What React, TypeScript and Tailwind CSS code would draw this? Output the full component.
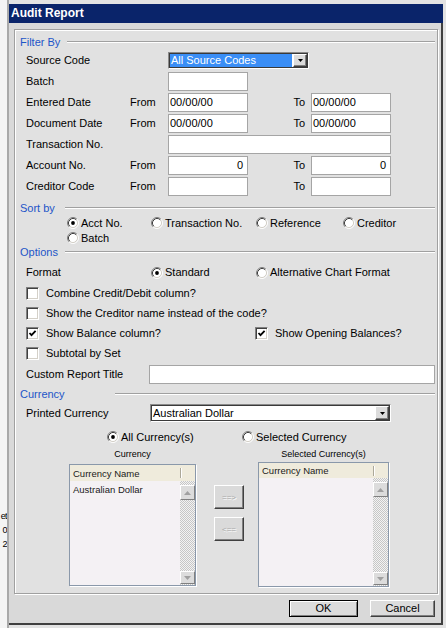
import React from "react";

function Radio({ checked = false }: { checked?: boolean }) {
  return (
    <svg width="12" height="12" viewBox="0 0 12 12" className="shrink-0">
      <circle cx="6" cy="6" r="4.5" fill="#ffffff" />
      <path d="M2.11 9.89 A5.5 5.5 0 0 1 9.89 2.11" stroke="#808080" strokeWidth="1" fill="none" />
      <path d="M9.89 2.11 A5.5 5.5 0 0 1 2.11 9.89" stroke="#ffffff" strokeWidth="1" fill="none" />
      <path d="M2.82 9.18 A4.5 4.5 0 0 1 9.18 2.82" stroke="#404040" strokeWidth="1" fill="none" />
      <path d="M9.18 2.82 A4.5 4.5 0 0 1 2.82 9.18" stroke="#d4d0c8" strokeWidth="1" fill="none" />
      {checked && <circle cx="6" cy="6" r="1.9" fill="#000000" />}
    </svg>
  );
}

function RadioItem({ label, checked = false, w = "" }: { label: string; checked?: boolean; w?: string }) {
  return (
    <div className={"flex items-center gap-[2px] shrink-0 " + w}>
      <Radio checked={checked} />
      <span className="whitespace-nowrap">{label}</span>
    </div>
  );
}

function Check({ checked = false }: { checked?: boolean }) {
  return (
    <div className="w-[13px] h-[13px] shrink-0 bg-white border border-t-[#808080] border-l-[#808080] border-b-white border-r-white shadow-[inset_1px_1px_0_#404040,inset_-1px_-1px_0_#d4d0c8] flex items-center justify-center">
      {checked && (
        <svg width="9" height="9" viewBox="0 0 9 9">
          <path d="M1.5 4 L3.5 6.2 L7.6 1.8" stroke="#000" strokeWidth="1.8" fill="none" />
        </svg>
      )}
    </div>
  );
}

function CheckItem({ label, checked = false, w = "" }: { label: string; checked?: boolean; w?: string }) {
  return (
    <div className={"flex items-center gap-[7px] shrink-0 " + w}>
      <Check checked={checked} />
      <span className="whitespace-nowrap">{label}</span>
    </div>
  );
}

function SectionHeader({ label, labelW }: { label: string; labelW: string }) {
  return (
    <div className="flex h-[14px] items-center pl-[5px] shrink-0">
      <span className={"text-[#1d55c8] whitespace-nowrap shrink-0 " + labelW}>{label}</span>
      <div className="flex-1 h-[2px] border-t border-t-[#a0a0a0] border-b border-b-white mr-[2px]" />
    </div>
  );
}

function Box({ w, children, right = false }: { w: string; children?: React.ReactNode; right?: boolean }) {
  return (
    <div
      className={
        "h-[19px] shrink-0 bg-white border border-[#a5a5a5] flex items-center " +
        (right ? "justify-end pr-[4px] " : "pl-[1px] ") +
        w
      }
    >
      {children}
    </div>
  );
}

function DropBtn() {
  return (
    <div className="w-[14px] h-full shrink-0 bg-[#dcdcdc] border border-t-white border-l-white border-b-[#404040] border-r-[#404040] shadow-[inset_-1px_-1px_0_#808080] flex items-center justify-center">
      <svg width="5" height="3" viewBox="0 0 5 3">
        <path d="M0 0 H5 L2.5 3 Z" fill="#000" />
      </svg>
    </div>
  );
}

function ScrollBtn({ up = false, h }: { up?: boolean; h: string }) {
  return (
    <div className={"w-full bg-[#dcdcdc] border border-t-white border-l-white border-b-[#808080] border-r-[#808080] flex items-center justify-center " + h}>
      <svg width="7" height="4" viewBox="0 0 7 4">
        {up ? <path d="M3.5 0 L7 4 H0 Z" fill="#a0a0a0" /> : <path d="M0 0 H7 L3.5 4 Z" fill="#a0a0a0" />}
      </svg>
    </div>
  );
}

function List({ size, headH, rows }: { size: string; headH: string; rows: string[] }) {
  return (
    <div className={"flex flex-col shrink-0 border border-[#8a98aa] shadow-[1px_1px_0_#fff] bg-[#f4f1f4] " + size}>
      <div className={"flex shrink-0 bg-[#efebdc] " + headH}>
        <div className="flex-1 flex items-center pl-[3px] text-[9.5px] text-[#1a1a1a]">Currency Name</div>
        <div className="w-[15px] flex items-center">
          <div className="w-[1px] h-[10px] bg-[#aca899] shadow-[1px_0_0_#fff]" />
        </div>
      </div>
      <div className="flex flex-1 min-h-0">
        <div className="flex-1 pl-[3px]">
          {rows.map((r) => (
            <div key={r} className="h-[16px] flex items-center text-[9.5px] text-[#1a1a1a]">
              {r}
            </div>
          ))}
        </div>
        <div className="w-[15px] flex flex-col justify-between pt-[4px] pb-[1px] bg-[image:conic-gradient(#c6c6c6_25%,#f3f3f3_0_50%,#c6c6c6_0_75%,#f3f3f3_0)] bg-[length:2px_2px]">
          <ScrollBtn up h="h-[15px]" />
          <ScrollBtn h="h-[13px]" />
        </div>
      </div>
    </div>
  );
}

function MoveBtn({ label }: { label: string }) {
  return (
    <div className="w-[30px] h-[24px] bg-[#dadada] border border-t-white border-l-white border-b-[#404040] border-r-[#404040] shadow-[inset_-1px_-1px_0_#808080] flex items-center justify-center text-[8px] text-[#a8a8a8] [text-shadow:1px_1px_0_#fff]">
      {label}
    </div>
  );
}

export default function App() {
  return (
    <div className="flex w-[446px] h-[628px] overflow-hidden bg-[#f4f4f4] font-['Liberation_Sans',Arial,sans-serif] text-[11px] leading-[13px] text-black">
      {/* background window strip */}
      <div className="w-[7px] h-[628px] shrink-0 overflow-hidden flex flex-col items-end pt-[509px] text-[9px] leading-[14px] tracking-[-0.6px]">
        <div className="whitespace-nowrap">et</div>
        <div className="whitespace-nowrap">0</div>
        <div className="whitespace-nowrap">2</div>
      </div>

      {/* dialog */}
      <div className="w-[439px] h-[628px] shrink-0 border-l-2 border-l-[#a9a9a9] bg-[#e3e3e3] flex flex-col">
        <div className="h-[4px] shrink-0" />
        <div className="w-[434px] h-[19px] shrink-0 bg-[#0a246a] text-white font-bold text-[12px] flex items-center pl-[2px]">
          Audit Report
        </div>
        <div className="w-[434px] h-[602px] shrink-0 bg-[#d9d9d9] border-r-2 border-b-2 border-[#404040] pt-[6px] pl-[5px] flex flex-col">
          {/* group panel */}
          <div className="w-[424px] h-[565px] shrink-0 border border-[#a0a0a0] shadow-[inset_1px_1px_0_#fff,1px_1px_0_#fff] bg-[#e1e1e1] pt-[5px] flex flex-col">
            <SectionHeader label="Filter By" labelW="w-[47px]" />
            <div className="mt-[1px] flex flex-col">
              <div className="flex h-[21px] items-center pl-[11px]">
                <span className="w-[142px] shrink-0">Source Code</span>
                <div className="w-[141px] h-[17px] shrink-0 border border-t-[#8a8a8a] border-l-[#8a8a8a] border-b-white border-r-white">
                  <div className="h-full flex border border-[#3a3a3a] bg-white">
                    <div className="flex-1 mr-[1px] bg-[#3a8ef6] text-white flex items-center pl-[1px] whitespace-nowrap">
                      All Source Codes
                    </div>
                    <DropBtn />
                  </div>
                </div>
              </div>
              <div className="flex h-[21px] items-center pl-[11px]">
                <span className="w-[142px] shrink-0">Batch</span>
                <Box w="w-[80px]" />
              </div>
              <div className="flex h-[21px] items-center pl-[11px]">
                <span className="w-[104px] shrink-0">Entered Date</span>
                <span className="w-[38px] shrink-0">From</span>
                <Box w="w-[80px]">00/00/00</Box>
                <span className="w-[63px] shrink-0 pr-[6px] text-right">To</span>
                <Box w="w-[80px]">00/00/00</Box>
              </div>
              <div className="flex h-[21px] items-center pl-[11px]">
                <span className="w-[104px] shrink-0">Document Date</span>
                <span className="w-[38px] shrink-0">From</span>
                <Box w="w-[80px]">00/00/00</Box>
                <span className="w-[63px] shrink-0 pr-[6px] text-right">To</span>
                <Box w="w-[80px]">00/00/00</Box>
              </div>
              <div className="flex h-[21px] items-center pl-[11px]">
                <span className="w-[142px] shrink-0">Transaction No.</span>
                <Box w="w-[223px]" />
              </div>
              <div className="flex h-[21px] items-center pl-[11px]">
                <span className="w-[104px] shrink-0">Account No.</span>
                <span className="w-[38px] shrink-0">From</span>
                <Box w="w-[80px]" right>
                  0
                </Box>
                <span className="w-[63px] shrink-0 pr-[6px] text-right">To</span>
                <Box w="w-[80px]" right>
                  0
                </Box>
              </div>
              <div className="flex h-[21px] items-center pl-[11px]">
                <span className="w-[104px] shrink-0">Creditor Code</span>
                <span className="w-[38px] shrink-0">From</span>
                <Box w="w-[80px]" />
                <span className="w-[63px] shrink-0 pr-[6px] text-right">To</span>
                <Box w="w-[80px]" />
              </div>
            </div>

            <div className="mt-[4px]">
              <SectionHeader label="Sort by" labelW="w-[45px]" />
            </div>
            <div className="flex h-[16px] items-center pl-[52px]">
              <RadioItem w="w-[84px]" checked label="Acct No." />
              <RadioItem w="w-[105px]" label="Transaction No." />
              <RadioItem w="w-[87px]" label="Reference" />
              <RadioItem label="Creditor" />
            </div>
            <div className="flex h-[14px] items-center pl-[52px]">
              <RadioItem label="Batch" />
            </div>

            <SectionHeader label="Options" labelW="w-[45px]" />
            <div className="mt-[3px] flex h-[21px] items-center pl-[11px]">
              <span className="w-[125px] shrink-0">Format</span>
              <RadioItem w="w-[105px]" checked label="Standard" />
              <RadioItem label="Alternative Chart Format" />
            </div>
            <div className="flex h-[20px] items-center pl-[11px]">
              <CheckItem label="Combine Credit/Debit column?" />
            </div>
            <div className="flex h-[21px] items-center pl-[11px]">
              <CheckItem label="Show the Creditor name instead of the code?" />
            </div>
            <div className="flex h-[19px] items-center pl-[11px]">
              <CheckItem w="w-[229px]" checked label="Show Balance column?" />
              <CheckItem checked label="Show Opening Balances?" />
            </div>
            <div className="flex h-[20px] items-center pl-[11px]">
              <CheckItem label="Subtotal by Set" />
            </div>
            <div className="flex h-[23px] items-center pl-[11px]">
              <span className="w-[123px] shrink-0">Custom Report Title</span>
              <Box w="w-[286px]" />
            </div>

            <div className="mt-[1px]">
              <SectionHeader label="Currency" labelW="w-[95px]" />
            </div>
            <div className="mt-[2px] flex h-[20px] items-center pl-[11px]">
              <span className="w-[124px] shrink-0">Printed Currency</span>
              <div className="w-[241px] h-[18px] shrink-0 border border-t-[#8a8a8a] border-l-[#8a8a8a] border-b-white border-r-white">
                <div className="h-full flex border border-[#3a3a3a] bg-white">
                  <div className="flex-1 flex items-center pl-[1px] whitespace-nowrap">Australian Dollar</div>
                  <DropBtn />
                </div>
              </div>
            </div>
            <div className="mt-[6px] flex h-[16px] items-center pl-[92px]">
              <RadioItem w="w-[135px]" checked label="All Currency(s)" />
              <RadioItem label="Selected Currency" />
            </div>
            <div className="mt-[2px] flex h-[14px] items-center pl-[54px] text-[9px]">
              <div className="w-[127px] shrink-0 text-center">Currency</div>
              <div className="w-[62px] shrink-0" />
              <div className="w-[131px] shrink-0 text-center">Selected Currency(s)</div>
            </div>
            <div className="flex items-start pl-[54px]">
              <div className="mt-[3px]">
                <List size="w-[127px] h-[122px]" headH="h-[16px]" rows={["Australian Dollar"]} />
              </div>
              <div className="ml-[18px] mt-[24px] flex flex-col gap-[8px]">
                <MoveBtn label="==>" />
                <MoveBtn label="<==" />
              </div>
              <div className="ml-[14px] mt-[1px]">
                <List size="w-[131px] h-[125px]" headH="h-[15px]" rows={[]} />
              </div>
            </div>
          </div>

          {/* buttons */}
          <div className="h-[29px] shrink-0 pt-[6px] pr-[6px] flex justify-end gap-[12px]">
            <div className="w-[69px] h-[17px] border border-black bg-[#dcdcdc] shadow-[inset_1px_1px_0_#fff,inset_-1px_-1px_0_#808080] flex items-center justify-center">
              OK
            </div>
            <div className="w-[65px] h-[17px] bg-[#dcdcdc] border border-t-white border-l-white border-b-[#404040] border-r-[#404040] shadow-[inset_-1px_-1px_0_#808080] flex items-center justify-center">
              Cancel
            </div>
          </div>
        </div>
      </div>
    </div>
  );
}
